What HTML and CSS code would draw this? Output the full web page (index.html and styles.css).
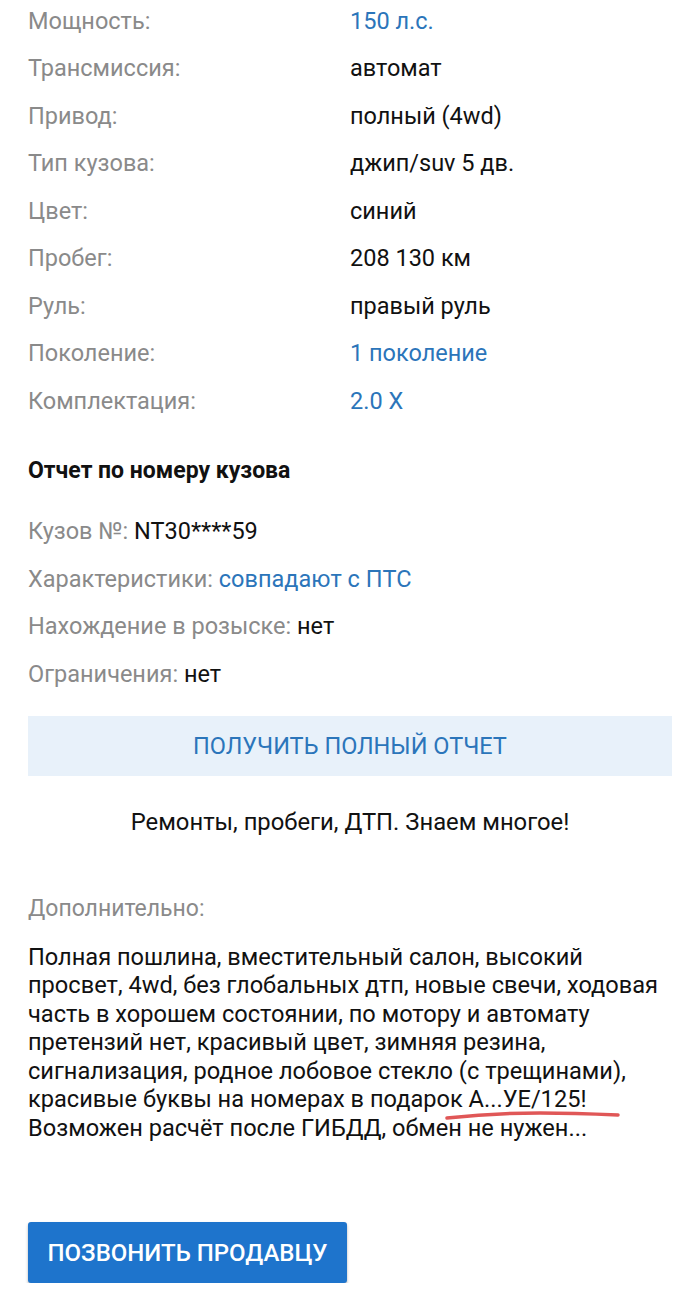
FILE: index.html
```html
<!DOCTYPE html>
<html lang="ru">
<head>
<meta charset="utf-8">
<link rel="stylesheet" href="styles.css">
</head>
<body>
<div class="page">
  <div class="specs">
    <div class="row"><span class="lbl">Мощность:</span><span class="val link">150 л.с.</span></div>
    <div class="row"><span class="lbl">Трансмиссия:</span><span class="val">автомат</span></div>
    <div class="row"><span class="lbl">Привод:</span><span class="val">полный (4wd)</span></div>
    <div class="row"><span class="lbl">Тип кузова:</span><span class="val">джип/suv 5 дв.</span></div>
    <div class="row"><span class="lbl">Цвет:</span><span class="val">синий</span></div>
    <div class="row"><span class="lbl">Пробег:</span><span class="val">208 130 км</span></div>
    <div class="row"><span class="lbl">Руль:</span><span class="val">правый руль</span></div>
    <div class="row"><span class="lbl">Поколение:</span><span class="val link">1 поколение</span></div>
    <div class="row"><span class="lbl">Комплектация:</span><span class="val link">2.0 X</span></div>
  </div>

  <h2 class="title">Отчет по номеру кузова</h2>

  <div class="report">
    <div class="rrow"><span class="lbl">Кузов №: </span><span class="dark">NT30****59</span></div>
    <div class="rrow"><span class="lbl">Характеристики: </span><span class="link">совпадают с ПТС</span></div>
    <div class="rrow"><span class="lbl">Нахождение в розыске: </span><span class="dark">нет</span></div>
    <div class="rrow"><span class="lbl">Ограничения: </span><span class="dark">нет</span></div>
  </div>

  <div class="full-btn">ПОЛУЧИТЬ ПОЛНЫЙ ОТЧЕТ</div>
  <div class="promo">Ремонты, пробеги, ДТП. Знаем многое!</div>

  <div class="extra-lbl">Дополнительно:</div>
  <div class="desc">Полная пошлина, вместительный салон, высокий<br>просвет, 4wd, без глобальных дтп, новые свечи, ходовая<br>часть в хорошем состоянии, по мотору и автомату<br>претензий нет, красивый цвет, зимняя резина,<br>сигнализация, родное лобовое стекло (с трещинами),<br>красивые буквы на номерах в подарок <span class="mark">А...УЕ/125!<svg class="scribble" width="176" height="12" viewBox="0 0 176 12"><path d="M2 8 C 30 5, 60 3, 95 3 C 125 3, 150 4, 173 5" fill="none" stroke="#e05757" stroke-width="3.5" stroke-linecap="round"/></svg></span><br>Возможен расчёт после ГИБДД, обмен не нужен...</div>

  <div class="call-btn">ПОЗВОНИТЬ ПРОДАВЦУ</div>
</div>
</body>
</html>
```
FILE: styles.css
```css
html, body { margin: 0; padding: 0; background: #fff; }
body { font-family: Roboto, "Noto Sans", sans-serif; color: #111; }
.page { padding: 0 28px; width: 644px; }
.specs { display: flex; flex-direction: column; }
.row { display: flex; height: 47.5px; align-items: center; font-size: 23.5px; }
.row:first-child { margin-top: -3px; }
.lbl { color: #8a8a8a; }
.row .lbl { width: 322px; }
.val { color: #111; }
.link { color: #2b75ba; }
.dark { color: #111; }
.title { font-size: 23px; font-weight: 700; margin: 33px 0 0; line-height: 26px; color: #111; }
.report { margin-top: 24px; display: flex; flex-direction: column; }
.rrow { height: 47.5px; display: flex; align-items: center; font-size: 23.5px; white-space: pre; }
.full-btn { margin-top: 18px; height: 60px; background: #e8f1fa; color: #2b75ba; font-size: 23.5px; display: flex; align-items: center; justify-content: center; }
.promo { margin-top: 32px; text-align: center; font-size: 23.8px; line-height: 28px; }
.extra-lbl { margin-top: 59px; font-size: 23px; color: #8a8a8a; line-height: 28px; }
.desc { margin-top: 20px; margin-right: -24px; font-size: 23.6px; line-height: 28.5px; white-space: nowrap; }
.mark { position: relative; }
.scribble { position: absolute; left: -24px; bottom: -9px; }
.call-btn { margin-top: 80px; width: 319px; height: 61px; background: #1e74cc; color: #fff; font-size: 24px; font-weight: 500; border-radius: 3px; box-shadow: 0 2px 3px rgba(0,0,0,0.3); display: flex; align-items: center; justify-content: center; }
```
